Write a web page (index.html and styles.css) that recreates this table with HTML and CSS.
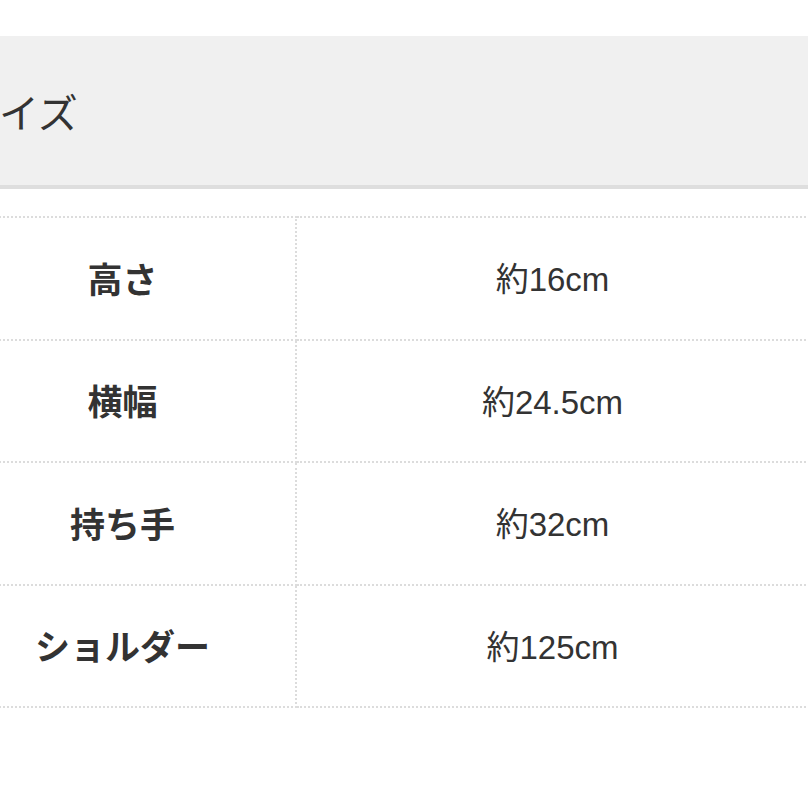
FILE: index.html
```html
<!DOCTYPE html>
<html lang="ja">
<head>
<meta charset="utf-8">
<link rel="stylesheet" href="styles.css">
</head>
<body>
<div class="page">
  <div class="section-head"><h2 class="section-title">サイズ</h2></div>
  <table class="size-table">
    <tr><th class="label">高さ</th><td class="value">約16cm</td></tr>
    <tr><th class="label">横幅</th><td class="value">約24.5cm</td></tr>
    <tr><th class="label">持ち手</th><td class="value">約32cm</td></tr>
    <tr><th class="label">ショルダー</th><td class="value">約125cm</td></tr>
  </table>
</div>
</body>
</html>
```
FILE: styles.css
```css
html, body {
  margin: 0;
  padding: 0;
  background: #ffffff;
  overflow: hidden;
}
.page {
  width: 808px;
  height: 808px;
  overflow: hidden;
  padding-top: 36px;
  box-sizing: border-box;
}
.section-head {
  height: 153px;
  background: #f0f0f0;
  border-bottom: 4px solid #dedede;
  display: flex;
  align-items: center;
  box-sizing: border-box;
}
.section-title {
  margin: 0 0 0 -41px;
  font-family: "Noto Sans CJK JP", sans-serif;
  font-weight: 400;
  font-size: 40px;
  color: #333333;
  line-height: 1;
}
.size-table {
  margin-top: 27px;
  margin-left: -52px;
  border-collapse: collapse;
  table-layout: fixed;
  width: 862px;
}
.size-table tr {
  height: 122.5px;
}
.label {
  width: 345px;
  border: 2px dotted #dcdcdc;
  font-family: "Noto Sans CJK JP", sans-serif;
  font-weight: 700;
  font-size: 35px;
  color: #333333;
  text-align: center;
  padding: 0 0 2px 0;
}
.value {
  border: 2px dotted #dcdcdc;
  font-family: "Liberation Sans", "Noto Sans CJK JP", sans-serif;
  font-weight: 400;
  font-size: 33px;
  color: #333333;
  text-align: center;
  padding: 0 0 2px 0;
}
```
